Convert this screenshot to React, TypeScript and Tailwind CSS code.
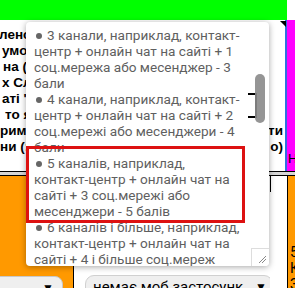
import React from "react";

const leftLines: { t: string; ml: string; right?: string }[] = [
  { t: "ленс", ml: "ml-[-1px]" },
  { t: "умо", ml: "ml-[2px]" },
  { t: "на (", ml: "ml-[3px]" },
  { t: "х Сл", ml: "ml-[2px]" },
  { t: "аті '", ml: "ml-[2px]" },
  { t: "то я", ml: "ml-[5px]" },
  { t: "римі", ml: "ml-[0px]", right: "ти" },
  { t: "ни (:", ml: "ml-[0px]", right: "о)" },
];

const popupLines: { t: string; bullet?: boolean }[] = [
  { t: "3 канали, наприклад, контакт-", bullet: true },
  { t: "центр + онлайн чат на сайті + 1" },
  { t: "соц.мережа або месенджер - 3" },
  { t: "бали" },
  { t: "4 канали, наприклад, контакт-", bullet: true },
  { t: "центр + онлайн чат на сайті + 2" },
  { t: "соц.мережі або месенджери - 4" },
  { t: "бали" },
  { t: "5 каналів, наприклад,", bullet: true },
  { t: "контакт-центр + онлайн чат на" },
  { t: "сайті + 3 соц.мережі або" },
  { t: "месенджери - 5 балів" },
  { t: "6 каналів і більше, наприклад,", bullet: true },
  { t: "контакт-центр + онлайн чат на" },
  { t: "сайті + 4 і більше соц.мереж" },
];

export default function App() {
  return (
    <div className="relative w-[295px] h-[288px] overflow-hidden bg-white font-['Roboto',sans-serif]">
      {/* top green row */}
      <div className="flex h-[20px]">
        <div className="w-[287px] bg-[#00ff00]" />
        <div className="flex-1 bg-white" />
      </div>

      {/* middle row */}
      <div className="flex h-[151px]">
        <div className="w-[285px] overflow-hidden pt-[7px] font-['Liberation_Sans',sans-serif] font-bold text-[13.5px] leading-[16px] text-black">
          {leftLines.map((l, i) => (
            <div key={i} className="flex justify-between whitespace-nowrap">
              <span className={l.ml}>{l.t}</span>
              {l.right ? <span className="mr-[2px]">{l.right}</span> : null}
            </div>
          ))}
        </div>
        <div className="flex-1 border-l-2 border-[#2f6fe0] bg-[#ff00ff] flex flex-col justify-end pb-[4px] pl-[1px] text-[13px] leading-[16px] font-['Liberation_Sans',sans-serif] text-black overflow-hidden">
          Н
        </div>
      </div>

      {/* separator */}
      <div className="h-[5px] border-y border-black bg-[#d6d6d6]" />

      {/* bottom row */}
      <div className="flex h-[112px]">
        <div className="w-[74px] bg-[#ff9900] border-r border-black overflow-hidden pt-[100px]">
          <div className="ml-[-12px] w-[75px] h-[24px] rounded-[8px] bg-[#efefef] border border-[#c8c8c8] flex justify-end items-start pr-[8px] pt-[2px] text-[12px] text-black">
            ▼
          </div>
        </div>
        <div className="w-[196px] relative overflow-hidden pt-[99px] pl-[11px]">
          <div className="w-[188px] h-[26px] rounded-[9px] bg-[#efefef] border border-[#d0d0d0] flex items-start justify-between pl-[7px] pr-[5px] pt-[1px] text-[15px] leading-[20px] text-black whitespace-nowrap">
            <span>немає моб застосунк</span>
            <span className="text-[12px]">▼</span>
          </div>
        </div>
        <div className="w-[1px] h-[16px] bg-black" />
        <div className="w-[16px]" />
        <div className="flex-1 border-l border-black bg-[#ff9900] pt-[68px] pl-[2px] text-[14px] leading-[16px] text-black overflow-hidden">
          <div>5</div>
          <div>К</div>
          <div>З</div>
        </div>
      </div>

      {/* note triangle */}
      <svg className="absolute left-[280px] top-[21px]" width="6" height="6" viewBox="0 0 6 6">
        <polygon points="0,0 6,0 6,6" fill="#000" />
      </svg>

      {/* popup textarea */}
      <div className="absolute left-[26px] top-[22px] w-[243px] h-[244px] bg-white rounded-[4px] shadow-[0_1px_6px_rgba(0,0,0,0.35)] overflow-hidden">
        <div className="pt-[5px] pl-[8px] text-[13.6px] leading-[16px] text-[#5f5f5f]">
          {popupLines.map((l, i) => (
            <div key={i} className="whitespace-nowrap">
              {l.bullet ? (
                <span className="inline-block w-[6px] h-[6px] rounded-full bg-[#666] mr-[5px] ml-[2px] align-[1px]" />
              ) : null}
              {l.t}
            </div>
          ))}
        </div>
        {/* resizer */}
        <div className="absolute right-0 bottom-0 w-[18px] h-[18px] bg-white border-l border-t border-[#dddddd]">
          <svg width="17" height="17" viewBox="0 0 17 17" className="absolute left-0 top-0">
            <line x1="7" y1="14" x2="14" y2="7" stroke="#888" strokeWidth="1" />
            <line x1="10" y1="14" x2="14" y2="10" stroke="#888" strokeWidth="1" />
          </svg>
        </div>
      </div>

      {/* bracket behind scrollbar */}
      <div className="absolute left-[248px] top-[93px] w-[9px] h-[25px] border-t-2 border-b-2 border-r-2 border-black" />
      {/* scrollbar thumb */}
      <div className="absolute left-[255px] top-[74px] w-[10px] h-[49px] rounded-full bg-[#8a8a8a]/90" />

      {/* red highlight */}
      <div className="absolute left-[26px] top-[146px] w-[219px] h-[77px] border-[3px] border-[#dd1111]" />
    </div>
  );
}
